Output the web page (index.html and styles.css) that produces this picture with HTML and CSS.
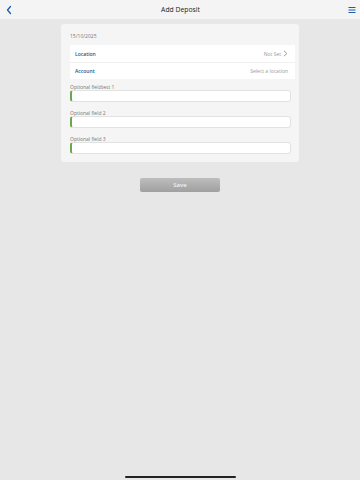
FILE: index.html
```html
<!DOCTYPE html>
<html>

<head>
    <meta charset="utf-8">
    <title>Add Deposit</title>
    <meta name="viewport" content="width=device-width, initial-scale=1">
    <link rel="stylesheet" href="styles.css">
</head>

<body>
    <header class="TopBar">
        <svg class="BackIcon" width="8" height="10" viewBox="0 0 8 10">
            <path d="M5.5 1.5 L2.5 5 L5.5 8.5" fill="none" stroke="#1a5ea8" stroke-width="1.3" stroke-linecap="round" stroke-linejoin="round" />
        </svg>
        <h1>Add Deposit</h1>
        <svg class="MenuIcon" width="8" height="8" viewBox="0 0 8 8">
            <path d="M0.5 1.5 H7.5 M0.5 4 H7.5 M0.5 6.5 H7.5" stroke="#1a5ea8" stroke-width="1" />
        </svg>
    </header>

    <main>
        <section class="Card">
            <div class="DateText">15/10/2025</div>
            <div class="RowGroup">
                <div class="Row">
                    <span class="RowLabel">Location</span>
                    <span class="RowValue">Not Set
                        <svg width="5" height="7" viewBox="0 0 5 7">
                            <path d="M1 0.8 L3.8 3.5 L1 6.2" fill="none" stroke="#9a9a9a" stroke-width="1" />
                        </svg>
                    </span>
                </div>
                <div class="Row">
                    <span class="RowLabel">Account</span>
                    <span class="RowValue">Select a location</span>
                </div>
            </div>
            <div class="FormInput">
                <label for="f1">Optional fieldtest 1</label>
                <input type="text" id="f1">
            </div>
            <div class="FormInput">
                <label for="f2">Optional field 2</label>
                <input type="text" id="f2">
            </div>
            <div class="FormInput">
                <label for="f3">Optional field 3</label>
                <input type="text" id="f3">
            </div>
        </section>

        <button class="SaveButton" type="button">Save</button>
    </main>

    <div class="HomeBar"></div>
</body>

</html>
```
FILE: styles.css
```css
* {
    box-sizing: border-box;
    padding: 0;
    margin: 0;
}

body {
    width: 360px;
    height: 480px;
    background-color: #e7e7e7;
    font-family: "Open Sans", "Noto Sans", sans-serif;
    display: flex;
    flex-direction: column;
    align-items: center;
}

.TopBar {
    width: 100%;
    height: 19px;
    display: flex;
    align-items: center;
    justify-content: space-between;
    padding: 0 4px 0 5px;
    background-color: #f4f4f4;

    & h1 {
        font-size: 6.8px;
        font-weight: 400;
        color: #222;
    }
}

main {
    width: 238px;
    display: flex;
    flex-direction: column;
    align-items: center;
    margin-top: 5px;
    flex: 1;
}

.Card {
    width: 100%;
    background-color: #f5f5f5;
    border-radius: 3px;
    padding: 9px 8px 8px 9px;

    & .DateText {
        font-size: 5px;
        color: #777;
        margin-bottom: 6px;
    }
}

.RowGroup {
    background-color: #fff;
    margin: 0 -4px 5px 0;
}

.Row {
    height: 17px;
    display: flex;
    align-items: center;
    justify-content: space-between;
    padding: 0 7px 0 5px;

    &+.Row {
        border-top: 1px solid #f0f0f0;
    }

    & .RowLabel {
        font-size: 5px;
        font-weight: 600;
        color: #1f5289;
    }

    & .RowValue {
        display: flex;
        align-items: center;
        gap: 2px;
        font-size: 5px;
        color: #999;
    }
}

.FormInput {
    display: flex;
    flex-direction: column;
    margin-bottom: 8px;

    &:last-child {
        margin-bottom: 0;
    }

    & label {
        font-size: 5px;
        color: #777;
        height: 6px;
        line-height: 6px;
    }

    & input {
        width: 100%;
        height: 12px;
        border: 1px solid #e2e2e2;
        border-left: 2px solid #6aa84f;
        border-radius: 3px;
        background-color: #fff;
    }
}

.SaveButton {
    width: 80px;
    height: 14px;
    margin-top: 16px;
    border: none;
    border-radius: 2px;
    background: linear-gradient(#bdbdbd, #a0a0a0);
    color: #f0f0f0;
    font-family: "Open Sans", "Noto Sans", sans-serif;
    font-size: 6px;
    font-weight: 600;
}

.HomeBar {
    width: 111px;
    height: 2px;
    border-radius: 1px;
    background-color: #222;
    margin-bottom: 2px;
}
```
